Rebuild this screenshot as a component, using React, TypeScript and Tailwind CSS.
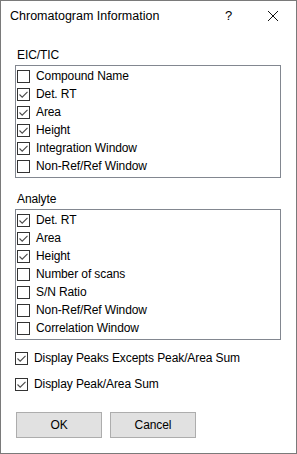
import React from "react";

type Item = { label: string; checked: boolean };

const eicItems: Item[] = [
  { label: "Compound Name", checked: false },
  { label: "Det. RT", checked: true },
  { label: "Area", checked: true },
  { label: "Height", checked: true },
  { label: "Integration Window", checked: true },
  { label: "Non-Ref/Ref Window", checked: false },
];

const analyteItems: Item[] = [
  { label: "Det. RT", checked: true },
  { label: "Area", checked: true },
  { label: "Height", checked: true },
  { label: "Number of scans", checked: false },
  { label: "S/N Ratio", checked: false },
  { label: "Non-Ref/Ref Window", checked: false },
  { label: "Correlation Window", checked: false },
];

function CheckBox({ checked }: { checked: boolean }) {
  return (
    <div className="w-[13px] h-[13px] border border-[#333333] bg-white flex items-center justify-center shrink-0">
      {checked && (
        <svg width="11" height="11" viewBox="0 0 11 11">
          <path d="M1.5 5.5 L4.2 8.2 L9.5 2.8" fill="none" stroke="#4a4a4a" strokeWidth="1.1" />
        </svg>
      )}
    </div>
  );
}

function Row({ item }: { item: Item }) {
  return (
    <div className="h-[18px] flex items-center gap-[6px]">
      <CheckBox checked={item.checked} />
      <span className="leading-[16px]">{item.label}</span>
    </div>
  );
}

function Group({ title, items, className }: { title: string; items: Item[]; className: string }) {
  return (
    <div className={className}>
      <div className="pl-[2px] h-[16px] leading-[16px] mb-[2px]">{title}</div>
      <div className="w-[266px] border border-[#828790] pt-[1px] pb-[2px] pl-[1px]">
        {items.map((it, i) => (
          <Row key={i} item={it} />
        ))}
      </div>
    </div>
  );
}

export default function App() {
  return (
    <div
      className="w-[297px] h-[454px] border border-[#7a7a7a] bg-white text-black text-[12px] tracking-[-0.1px] flex flex-col"
      style={{ fontFamily: '"Liberation Sans", Arial, sans-serif' }}
    >
      {/* Title bar */}
      <div className="h-[30px] flex items-center pl-[9px] relative">
        <span className="leading-[16px] text-[12.5px] tracking-normal">Chromatogram Information</span>
        <span className="absolute left-[224px] top-[7px] text-[13px] leading-[16px]">?</span>
        <svg className="absolute left-[266px] top-[9px]" width="12" height="12" viewBox="0 0 12 12">
          <path d="M1 1 L11 11 M11 1 L1 11" stroke="#111" strokeWidth="1" />
        </svg>
      </div>

      <div className="pl-[14px]">
        <Group title="EIC/TIC" items={eicItems} className="mt-[16px]" />
        <Group title="Analyte" items={analyteItems} className="mt-[13px]" />

        {/* Display options */}
        <div className="mt-[9px] flex flex-col gap-[8px]">
          <Row item={{ label: "Display Peaks Excepts Peak/Area Sum", checked: true }} />
          <Row item={{ label: "Display Peak/Area Sum", checked: true }} />
        </div>

        {/* Buttons */}
        <div className="mt-[19px] flex gap-[8px] pl-[1px]">
          <button className="w-[86px] h-[26px] bg-[#e1e1e1] border border-[#adadad] leading-[16px]">OK</button>
          <button className="w-[86px] h-[26px] bg-[#e1e1e1] border border-[#adadad] leading-[16px]">Cancel</button>
        </div>
      </div>
    </div>
  );
}
